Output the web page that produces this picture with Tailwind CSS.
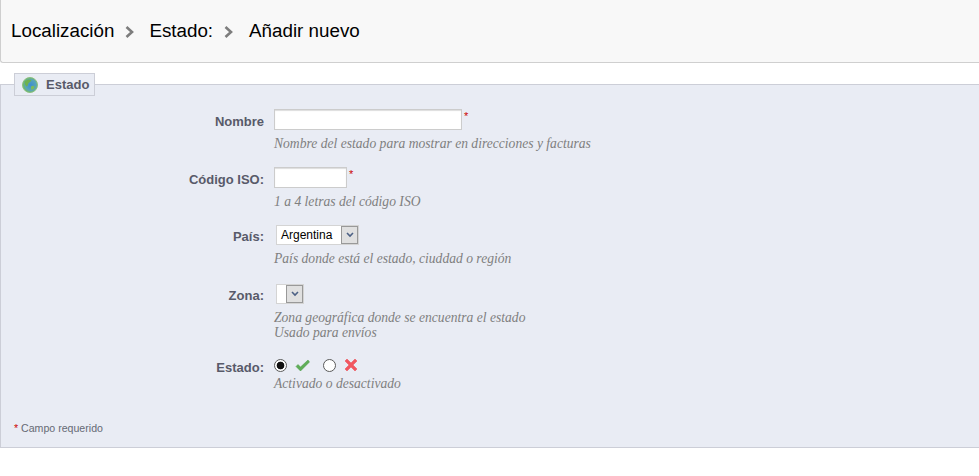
<!DOCTYPE html>
<html lang="es">
<head>
    <meta charset="UTF-8">
    <meta name="viewport" content="width=device-width, initial-scale=1.0">
    <title>Estado - Añadir nuevo</title>
    <script src="https://cdn.jsdelivr.net/npm/@tailwindcss/browser@4"></script>
</head>
<body class="bg-white font-['Liberation_Sans',Arial,sans-serif] h-[476px] overflow-hidden">
    <!-- Header -->
    <div class="h-[63px] bg-[#f8f8f8] border-b border-l border-[#cfcfcf] rounded-bl-[3px] flex items-center pl-[10px] text-[18.8px] text-black">
        <span>Localización</span>
        <svg class="ml-[11px] mr-[15px] mt-[2px]" width="9" height="12" viewBox="0 0 9 12"><path d="M1.5 1 L7 6 L1.5 11" fill="none" stroke="#7d7d7d" stroke-width="2.6"/></svg>
        <span>Estado:</span>
        <svg class="ml-[11px] mr-[16px] mt-[2px]" width="9" height="12" viewBox="0 0 9 12"><path d="M1.5 1 L7 6 L1.5 11" fill="none" stroke="#7d7d7d" stroke-width="2.6"/></svg>
        <span>Añadir nuevo</span>
    </div>

    <!-- Form -->
    <fieldset class="mt-[10px] h-[375px] bg-[#e9ecf4] border border-[#ccced7] border-r-0 relative">
        <legend class="ml-[13px] h-[23px] w-[81px] bg-[#e9ecf4] border border-[#ccced7] flex items-center pl-[7px] gap-[8px] text-[13px] font-bold text-[#585a69]">
            <svg width="16" height="16" viewBox="0 0 16 16">
                <defs><radialGradient id="globe" cx="55%" cy="50%" r="55%"><stop offset="0" stop-color="#3d8fd0"/><stop offset="0.65" stop-color="#5aa6b8"/><stop offset="1" stop-color="#74bd55"/></radialGradient></defs>
                <circle cx="8" cy="8" r="7.5" fill="url(#globe)" stroke="#8cc07e" stroke-width="1"/>
                <path d="M3 4.5 C5 2 8 2 9.5 3 C9 5 7 5 6 7 C6 9 5 10 4 9 C3 8 2.5 6 3 4.5 Z" fill="#6fb24e"/>
                <path d="M9 9.5 C11 8 13.5 9 12 11.5 C11 13 9 13 9 12 Z" fill="#7dbb5c"/>
            </svg>
            <span>Estado</span>
        </legend>

        <div class="pt-[13px] flex flex-col">
            <!-- Nombre -->
            <div class="flex">
                <label class="w-[263px] shrink-0 text-right pt-[3px] text-[13px] font-bold text-[#585a69]">Nombre</label>
                <div class="ml-[10px]">
                    <div class="flex items-start">
                        <input type="text" class="w-[188px] h-[21px] bg-white border border-[#ccc] shadow-[inset_0_1px_1px_#ddd]">
                        <span class="ml-[2px] mt-[2px] text-[11px] leading-[11px] text-[#cc0000]">*</span>
                    </div>
                    <p class="mt-[6px] font-['Liberation_Serif',serif] italic text-[13.6px] leading-[15px] text-[#7f7f7f]">Nombre del estado para mostrar en direcciones y facturas</p>
                </div>
            </div>

            <!-- Codigo ISO -->
            <div class="flex mt-[16px]">
                <label class="w-[263px] shrink-0 text-right pt-[3px] text-[13px] font-bold text-[#585a69]">Código ISO:</label>
                <div class="ml-[10px]">
                    <div class="flex items-start">
                        <input type="text" class="w-[73px] h-[21px] bg-white border border-[#ccc] shadow-[inset_0_1px_1px_#ddd]">
                        <span class="ml-[2px] mt-[2px] text-[11px] leading-[11px] text-[#cc0000]">*</span>
                    </div>
                    <p class="mt-[6px] font-['Liberation_Serif',serif] italic text-[13.6px] leading-[15px] text-[#7f7f7f]">1 a 4 letras del código ISO</p>
                </div>
            </div>

            <!-- Pais -->
            <div class="flex mt-[16px]">
                <label class="w-[263px] shrink-0 text-right pt-[2px] text-[13px] font-bold text-[#585a69]">País:</label>
                <div class="ml-[10px]">
                    <div class="flex w-fit ml-[2px] h-[20px] bg-white border border-[#d4d4d4]">
                        <span class="w-[64px] pl-[4px] text-[12px] leading-[18px] text-black">Argentina</span>
                        <span class="w-[17px] bg-[#e0e0e0] border border-[#999] flex items-center justify-center">
                            <svg width="8" height="6" viewBox="0 0 8 6"><path d="M1 1 L4 4 L7 1" fill="none" stroke="#4d6185" stroke-width="1.6"/></svg>
                        </span>
                    </div>
                    <p class="mt-[6px] font-['Liberation_Serif',serif] italic text-[13.6px] leading-[15px] text-[#7f7f7f]">País donde está el estado, ciuddad o región</p>
                </div>
            </div>

            <!-- Zona -->
            <div class="flex mt-[18px]">
                <label class="w-[263px] shrink-0 text-right pt-[2px] text-[13px] font-bold text-[#585a69]">Zona:</label>
                <div class="ml-[10px]">
                    <div class="flex w-fit ml-[2px] h-[20px] bg-white border border-[#d4d4d4]">
                        <span class="w-[9px]"></span>
                        <span class="w-[17px] bg-[#e0e0e0] border border-[#999] flex items-center justify-center">
                            <svg width="8" height="6" viewBox="0 0 8 6"><path d="M1 1 L4 4 L7 1" fill="none" stroke="#4d6185" stroke-width="1.6"/></svg>
                        </span>
                    </div>
                    <p class="mt-[6px] font-['Liberation_Serif',serif] italic text-[13.6px] leading-[15px] text-[#7f7f7f]">Zona geográfica donde se encuentra el estado<br>Usado para envíos</p>
                </div>
            </div>

            <!-- Estado -->
            <div class="flex mt-[17px]">
                <label class="w-[263px] shrink-0 text-right pt-[1px] text-[13px] font-bold text-[#585a69]">Estado:</label>
                <div class="ml-[10px]">
                    <div class="flex items-center h-[16px]">
                        <input type="radio" name="active" checked class="appearance-none w-[13px] h-[13px] rounded-full border border-[#5a5a5a] bg-white checked:bg-[radial-gradient(circle,#111_3.5px,#fff_4.2px)]">
                        <svg class="ml-[8px]" width="15" height="13" viewBox="0 0 15 13"><path d="M1 7.5 L3 5.5 L5.5 8 L13 1 L14.5 3 L5.5 12 Z" fill="#5fae57" stroke="#4b9a48" stroke-width="0.5"/></svg>
                        <input type="radio" name="active" class="appearance-none ml-[13px] w-[13px] h-[13px] rounded-full border border-[#5a5a5a] bg-white checked:bg-[radial-gradient(circle,#111_3.5px,#fff_4.2px)]">
                        <svg class="ml-[8px]" width="14" height="14" viewBox="0 0 14 14"><path d="M3 1 L7 5 L11 1 L13 3 L9 7 L13 11 L11 13 L7 9 L3 13 L1 11 L5 7 L1 3 Z" fill="#f2565f" stroke="#ea4650" stroke-width="0.5"/></svg>
                    </div>
                    <p class="mt-[3px] font-['Liberation_Serif',serif] italic text-[13.6px] leading-[15px] text-[#7f7f7f]">Activado o desactivado</p>
                </div>
            </div>

            <!-- Footer note -->
            <p class="mt-[31px] pl-[13px] text-[10.6px] leading-[12px] text-[#666a75]"><span class="text-[#cc0000]">*</span> Campo requerido</p>
        </div>
    </fieldset>
</body>
</html>
